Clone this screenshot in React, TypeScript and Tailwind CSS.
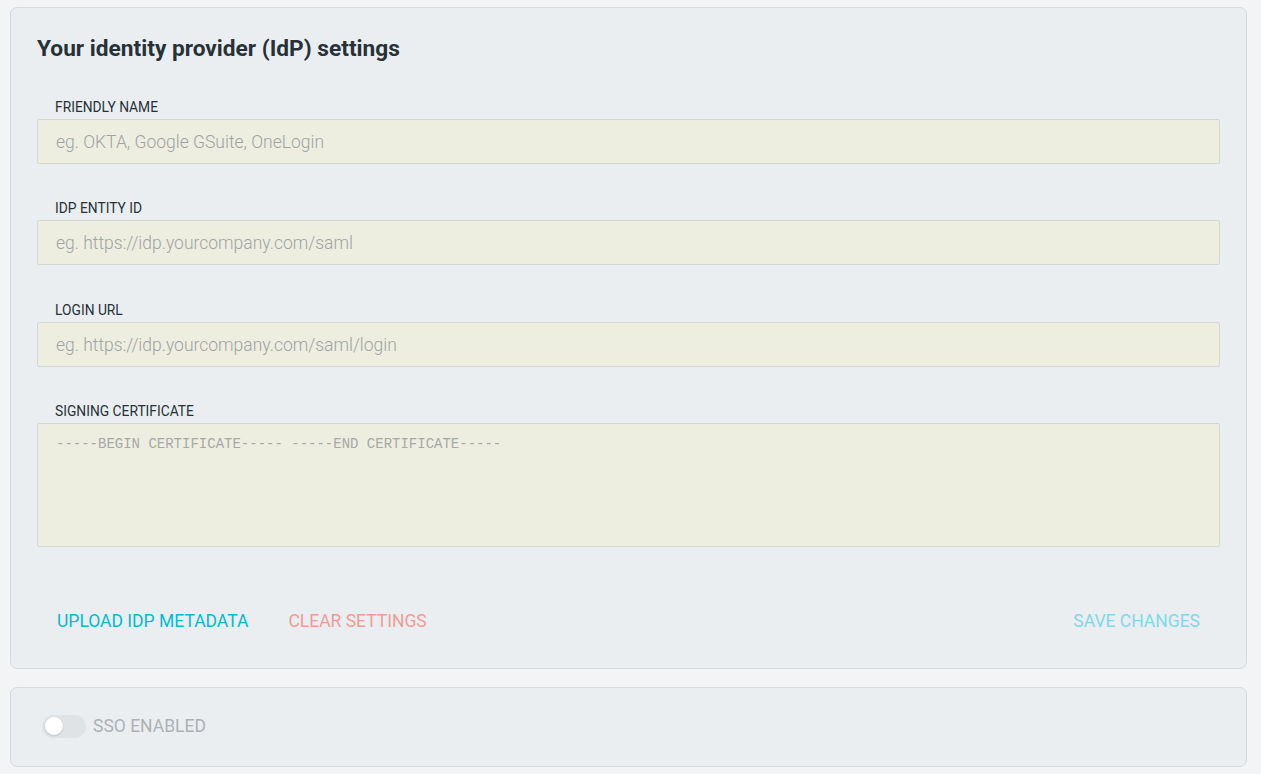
import React from "react";

const labelCls =
  "mb-[4px] h-[17px] pl-[18px] pt-[1px] text-[13.8px] leading-4 font-normal uppercase text-[#263238]";

const Field = ({ label, placeholder, extra = "" }: { label: string; placeholder: string; extra?: string }) => (
  <div className={"flex flex-col " + extra}>
    <label className={labelCls}>{label}</label>
    <input
      type="text"
      placeholder={placeholder}
      className="h-[45px] w-full rounded-[2px] border border-[#d3d8d3] bg-[#edeedf] pl-[18px] text-[17.5px] font-light text-[#37474f] outline-none placeholder:text-[#a0a3a4]"
      style={{ fontFamily: "Roboto, sans-serif" }}
    />
  </div>
);

export default function App() {
  return (
    <div
      className="min-h-[774px] bg-[#f3f4f6] pt-[7px] pl-[10px] pr-[14px]"
      style={{ fontFamily: "Roboto, 'Liberation Sans', sans-serif" }}
    >
      <div className="rounded-[7px] border border-[#d5dadf] bg-[#ebeef1] px-[26px] pt-[27px] pb-[29px]">
        <h2 className="text-[22.7px] leading-7 font-bold text-[#263238]">Your identity provider (IdP) settings</h2>
        <div className="mt-[35px] flex flex-col gap-[35px]">
          <Field label="Friendly Name" placeholder="eg. OKTA, Google GSuite, OneLogin" />
          <Field label="IdP Entity ID" placeholder="eg. https://idp.yourcompany.com/saml" />
          <Field label="Login URL" placeholder="eg. https://idp.yourcompany.com/saml/login" extra="mt-[1px]" />
          <div className="flex flex-col">
            <label className={labelCls}>Signing Certificate</label>
            <textarea
              placeholder="-----BEGIN CERTIFICATE----- -----END CERTIFICATE-----"
              className="h-[124px] w-full resize-none rounded-[2px] border border-[#d3d8d3] bg-[#edeedf] pl-[18px] pt-[12px] text-[14px] leading-4 text-[#37474f] outline-none placeholder:text-[#a8a8a8]"
              style={{ fontFamily: "'Liberation Mono', 'Courier New', monospace" }}
            />
          </div>
        </div>
        <div className="mt-[56px] flex h-9 items-center">
          <button className="h-9 px-5 text-[17.5px] uppercase text-[#00bcd4]">Upload IdP Metadata</button>
          <button className="h-9 px-5 text-[17.5px] uppercase text-[#f19b96]">Clear Settings</button>
          <div className="flex-1" />
          <button className="h-9 px-5 text-[17.5px] uppercase text-[#7fd9e6]">Save Changes</button>
        </div>
      </div>
      <div className="mt-[18px] flex h-[80px] items-center rounded-[7px] border border-[#d5dadf] bg-[#ebeef1] pb-[2px] pl-[31px]">
        <div className="relative h-[23px] w-[44px] rounded-full bg-[#dfe3e6]">
          <div className="absolute left-[3px] top-[2.5px] h-[18px] w-[18px] rounded-full bg-white shadow-[0_1px_2px_rgba(0,0,0,0.15)]" />
        </div>
        <span className="ml-[7px] text-[17.5px] uppercase text-[#adb1b5]">SSO Enabled</span>
      </div>
    </div>
  );
}
